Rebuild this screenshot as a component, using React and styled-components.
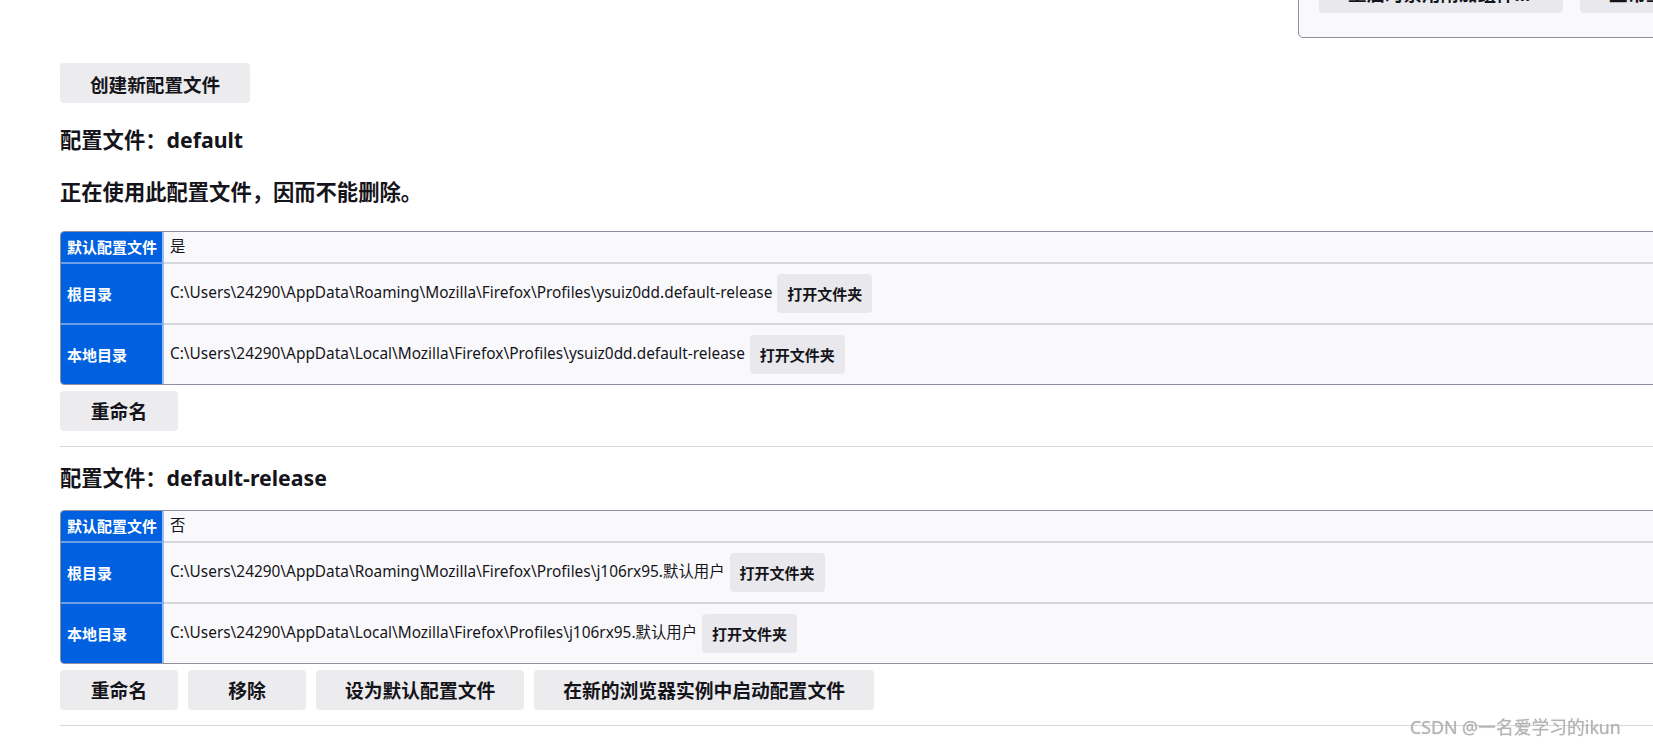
import React from "react";
import styled, { createGlobalStyle } from "styled-components";

const GlobalStyle = createGlobalStyle`
  html, body {
    margin: 0;
    padding: 0;
    background: #ffffff;
    overflow: hidden;
  }
  body {
    font-family: "Noto Sans", "Noto Sans CJK SC", sans-serif;
    color: #15141a;
  }
`;

const profiles = [
  {
    name: "default",
    inUse: true,
    isDefault: "是",
    root: "C:\\Users\\24290\\AppData\\Roaming\\Mozilla\\Firefox\\Profiles\\ysuiz0dd.default-release",
    local: "C:\\Users\\24290\\AppData\\Local\\Mozilla\\Firefox\\Profiles\\ysuiz0dd.default-release",
    actions: ["重命名"],
  },
  {
    name: "default-release",
    inUse: false,
    isDefault: "否",
    root: "C:\\Users\\24290\\AppData\\Roaming\\Mozilla\\Firefox\\Profiles\\j106rx95.默认用户",
    local: "C:\\Users\\24290\\AppData\\Local\\Mozilla\\Firefox\\Profiles\\j106rx95.默认用户",
    actions: ["重命名", "移除", "设为默认配置文件", "在新的浏览器实例中启动配置文件"],
  },
];

export default function App() {
  return (
    <>
      <GlobalStyle />
      <Page>
        <TopPanel>
          <PanelButton>重启时禁用附加组件…</PanelButton>
          <PanelButton>正常重启…</PanelButton>
        </TopPanel>
        <CreateButton>创建新配置文件</CreateButton>
        {profiles.map((p, i) => (
          <Section key={p.name}>
            <ProfileTitle $first={i === 0}>配置文件：{p.name}</ProfileTitle>
            {p.inUse && <InUseNote>正在使用此配置文件，因而不能删除。</InUseNote>}
            <InfoTable>
              <tbody>
                <tr>
                  <th>默认配置文件</th>
                  <td>{p.isDefault}</td>
                </tr>
                <tr>
                  <th>根目录</th>
                  <td>
                    {p.root}
                    <FolderButton>打开文件夹</FolderButton>
                  </td>
                </tr>
                <tr>
                  <th>本地目录</th>
                  <td>
                    {p.local}
                    <FolderButton>打开文件夹</FolderButton>
                  </td>
                </tr>
              </tbody>
            </InfoTable>
            <Actions>
              {p.actions.map((a) => (
                <ActionButton key={a}>{a}</ActionButton>
              ))}
            </Actions>
            <Divider />
          </Section>
        ))}
      </Page>
      <Watermark>CSDN @一名爱学习的ikun</Watermark>
    </>
  );
}

const Page = styled.div`
  display: flex;
  flex-direction: column;
  align-items: flex-start;
  padding-left: 60px;
  width: 1660px;
`;

const TopPanel = styled.div`
  align-self: flex-end;
  display: flex;
  gap: 17px;
  margin-top: -45px;
  width: 400px;
  padding: 17px 0 24px 20px;
  background: #f9f9fb;
  border: 1px solid #8f8f9d;
  border-radius: 5px;
`;

const BaseButton = styled.button`
  font-family: "Noto Sans", "Noto Sans CJK SC", sans-serif;
  font-weight: 700;
  color: #15141a;
  background: #e9e9ed;
  border: none;
  border-radius: 4px;
  white-space: nowrap;
  cursor: pointer;
`;

const PanelButton = styled(BaseButton)`
  height: 40px;
  font-size: 18.5px;
  padding: 0 29px;
  min-width: 244px;
  text-align: left;
`;

const CreateButton = styled(BaseButton)`
  margin-top: 25px;
  height: 40px;
  padding: 0 30px;
  font-size: 18.6px;
  background: #ececee;
`;

const Section = styled.section`
  width: 100%;
  display: flex;
  flex-direction: column;
  align-items: flex-start;
`;

const ProfileTitle = styled.h2`
  margin: ${(p) => (p.$first ? "23px 0 0" : "17px 0 18px")};
  font-size: 21.3px;
  line-height: 28px;
  font-weight: 700;
`;

const InUseNote = styled.h3`
  margin: 24px 0 25px;
  font-size: 21.3px;
  line-height: 28px;
  font-weight: 700;
`;

const InfoTable = styled.table`
  width: 100%;
  border: 1px solid #8f8f9d;
  border-radius: 4px;
  border-spacing: 0;
  background: #f9f9fb;
  overflow: hidden;
  font-size: 15px;

  th,
  td {
    padding: 5px 6px;
    line-height: 20px;
    text-align: left;
    white-space: nowrap;
  }
  th {
    width: 1px;
    padding-right: 5px;
    background: #0061e0;
    color: #ffffff;
    font-weight: 700;
    border-right: 2px solid #9dbcef;
  }
  td {
    color: #15141a;
    font-size: 15.4px;
  }
  tr + tr th {
    border-top: 2px solid #6a9ee9;
  }
  tr + tr td {
    border-top: 2px solid #d7d7dc;
  }
`;

const FolderButton = styled(BaseButton)`
  margin: 5px 0 5px 5px;
  height: 39px;
  padding: 0 10px;
  font-size: 15px;
  vertical-align: middle;
`;

const Actions = styled.div`
  display: flex;
  gap: 10px;
  margin-top: 6px;
`;

const ActionButton = styled(BaseButton)`
  height: 40px;
  min-width: 118px;
  padding: 0 29px;
  font-size: 18.8px;
  background: #ececee;
`;

const Divider = styled.hr`
  width: 100%;
  margin: 15px 0 0;
  border: none;
  border-top: 1px solid #d7d7db;
`;

const Watermark = styled.div`
  position: fixed;
  left: 1410px;
  top: 713px;
  font-family: "Noto Sans", "Noto Sans CJK SC", sans-serif;
  font-size: 17.8px;
  color: #b4b4b4;
  text-shadow: 0 0 1px rgba(80, 80, 80, 0.35);
  white-space: nowrap;
`;
